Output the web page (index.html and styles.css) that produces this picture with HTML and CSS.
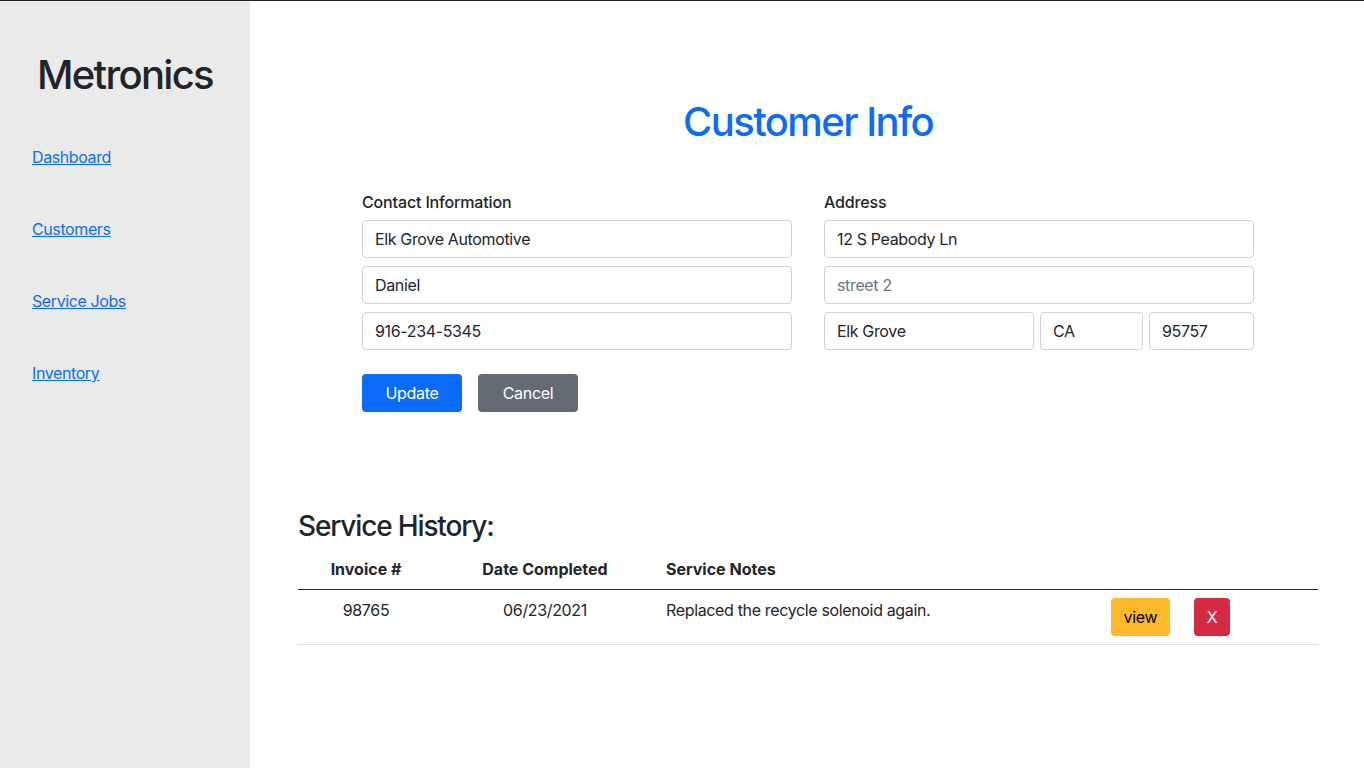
FILE: index.html
```html
<!DOCTYPE html>
<html lang="en">
<head>
<meta charset="utf-8">
<title>Customer Info</title>
<link rel="stylesheet" href="styles.css">
</head>
<body>
<div class="app">
  <aside class="sidebar">
    <div class="brand">Metronics</div>
    <nav class="nav">
      <a href="#">Dashboard</a>
      <a href="#">Customers</a>
      <a href="#">Service Jobs</a>
      <a href="#">Inventory</a>
    </nav>
  </aside>
  <main class="main">
    <h1 class="page-title">Customer Info</h1>
    <form class="customer-form">
      <div class="form-cols">
        <div class="form-col">
          <label class="form-label">Contact Information</label>
          <input class="form-control" type="text" value="Elk Grove Automotive">
          <input class="form-control" type="text" value="Daniel">
          <input class="form-control" type="text" value="916-234-5345">
        </div>
        <div class="form-col">
          <label class="form-label">Address</label>
          <input class="form-control" type="text" value="12 S Peabody Ln">
          <input class="form-control" type="text" placeholder="street 2">
          <div class="city-row">
            <input class="form-control city" type="text" value="Elk Grove">
            <input class="form-control state" type="text" value="CA">
            <input class="form-control zip" type="text" value="95757">
          </div>
        </div>
      </div>
      <div class="form-actions">
        <button type="button" class="btn btn-primary">Update</button>
        <button type="button" class="btn btn-secondary">Cancel</button>
      </div>
    </form>

    <section class="history">
      <h2 class="history-title">Service History:</h2>
      <table class="table">
        <thead>
          <tr>
            <th class="col-invoice">Invoice #</th>
            <th class="col-date">Date Completed</th>
            <th class="col-notes">Service Notes</th>
            <th class="col-actions"></th>
          </tr>
        </thead>
        <tbody>
          <tr>
            <td class="col-invoice">98765</td>
            <td class="col-date">06/23/2021</td>
            <td class="col-notes">Replaced the recycle solenoid again.</td>
            <td class="col-actions">
              <div class="row-actions">
                <button type="button" class="btn btn-warning btn-view">view</button>
                <button type="button" class="btn btn-danger btn-x">X</button>
              </div>
            </td>
          </tr>
        </tbody>
      </table>
    </section>
  </main>
</div>
</body>
</html>
```

FILE: styles.css
```css
* { box-sizing: border-box; }

html, body {
  margin: 0;
  padding: 0;
}

body {
  font-family: Inter, "Noto Sans", "Liberation Sans", sans-serif;
  font-size: 16px;
  line-height: 1.5;
  letter-spacing: -0.35px;
  color: #212529;
  background: #fff;
  border-top: 1px solid #222;
}

.app {
  display: flex;
  min-height: 767px;
}

.sidebar {
  width: 250px;
  flex: 0 0 250px;
  background: #eaeaea;
  padding: 50px 0 0 32px;
}

.brand {
  font-size: 40px;
  font-weight: 500;
  line-height: 48px;
  margin-left: 5px;
  letter-spacing: -1.7px;
}

.nav {
  display: flex;
  flex-direction: column;
  gap: 48px;
  margin-top: 46px;
}

.nav a {
  color: #0b6cfb;
  line-height: 24px;
  text-decoration: underline;
  letter-spacing: -0.4px;
}

.main {
  flex: 1;
  padding: 0 46px 0 48px;
}

.page-title {
  margin: 97px 0 0;
  text-align: center;
  color: #0b6cfb;
  font-size: 40px;
  font-weight: 500;
  line-height: 48px;
  letter-spacing: -1.6px;
}

.customer-form {
  width: 892px;
  margin: 44px auto 0;
}

.form-cols {
  display: flex;
  gap: 32px;
}

.form-col {
  flex: 1;
  display: flex;
  flex-direction: column;
  gap: 8px;
}

.form-label {
  font-weight: 500;
  line-height: 24px;
  margin-bottom: -2px;
  letter-spacing: -0.15px;
}

.form-control {
  display: block;
  width: 100%;
  height: 38px;
  padding: 6px 12px;
  font: inherit;
  letter-spacing: -0.35px;
  color: #212529;
  background: #fff;
  border: 1px solid #ced4da;
  border-radius: 4px;
}

.form-control::placeholder {
  color: #6c757d;
}

.city-row {
  display: flex;
  gap: 6px;
}

.city { flex: 0 0 210px; }
.state { flex: 0 0 103px; }
.zip { flex: 1; }

.form-actions {
  display: flex;
  gap: 16px;
  margin-top: 24px;
}

.btn {
  font: inherit;
  letter-spacing: -0.3px;
  line-height: 24px;
  padding: 6px 12px;
  border: 1px solid transparent;
  border-radius: 4px;
  cursor: pointer;
}

.form-actions .btn {
  width: 100px;
  height: 38px;
}

.btn-primary { background: #0b6cfb; color: #fff; }
.btn-secondary { background: #646b73; color: #fff; }
.btn-warning { background: #feb92a; color: #000; }
.btn-danger { background: #d42a42; color: #fff; }

.history {
  margin-top: 97px;
}

.history-title {
  margin: 0 0 6px;
  font-size: 28px;
  font-weight: 500;
  line-height: 34px;
  letter-spacing: -1.15px;
}

.table {
  width: 1020px;
  border-collapse: collapse;
}

.table th,
.table td {
  padding: 8px;
  text-align: left;
  vertical-align: top;
  line-height: 24px;
}

.table th {
  font-weight: 700;
  letter-spacing: 0;
  border-bottom: 1px solid #212529;
}

.table td {
  border-bottom: 1px solid #dee2e6;
}

.table .col-invoice { width: 136px; text-align: center; }
.table .col-date { width: 222px; text-align: center; }
.table .col-notes { width: 447px; padding-left: 10px; }

.row-actions {
  display: flex;
  gap: 24px;
}

.btn-view {
  width: 59px;
  height: 38px;
  padding: 6px 8px;
}

.btn-x {
  width: 36px;
  height: 38px;
  padding: 6px 8px;
}
```
